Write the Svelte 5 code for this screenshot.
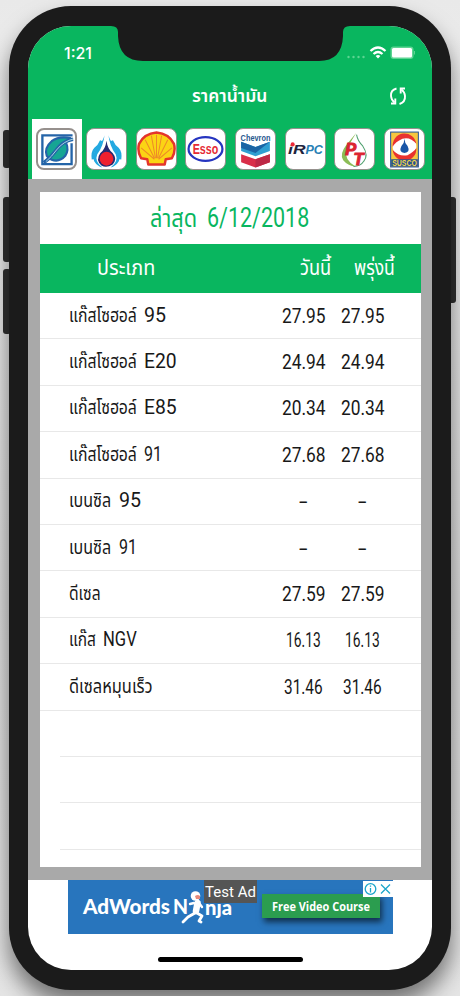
<script lang="ts">
	type Part = [text: string, width: number];
	type Row = { name: Part; grade?: Part; price: Part };

	const brands = ['bangchak', 'ptt', 'shell', 'esso', 'chevron', 'irpc', 'pt', 'susco'];
	let selected = $state('bangchak');

	// today and tomorrow always show the same price here
	const rows: Row[] = [
		{ name: ['แก๊สโซฮอล์', 68], grade: ['95', 22], price: ['27.95', 44] },
		{ name: ['แก๊สโซฮอล์', 68], grade: ['E20', 33], price: ['24.94', 44] },
		{ name: ['แก๊สโซฮอล์', 68], grade: ['E85', 33], price: ['20.34', 44] },
		{ name: ['แก๊สโซฮอล์', 68], grade: ['91', 18], price: ['27.68', 44] },
		{ name: ['เบนซิล', 42], grade: ['95', 22], price: ['-', 9] },
		{ name: ['เบนซิล', 42], grade: ['91', 18], price: ['-', 9] },
		{ name: ['ดีเซล', 32], price: ['27.59', 44] },
		{ name: ['แก๊ส', 27], grade: ['NGV', 34], price: ['16.13', 35] },
		{ name: ['ดีเซลหมุนเร็ว', 84], price: ['31.46', 39] }
	];

	// squeeze a label horizontally to the given width
	function fit(node: HTMLElement, width: number) {
		const natural = node.offsetWidth;
		node.style.transform = `scaleX(${width / natural})`;
		node.style.marginRight = `${width - natural}px`;
	}
</script>

{#snippet label([text, width]: Part)}
	<span class="fit" use:fit={width}>{text}</span>
{/snippet}

<div class="stage">
	<i class="key mute"></i>
	<i class="key up"></i>
	<i class="key down"></i>
	<i class="key power"></i>
	<div class="phone">
		<div class="screen">
			<svg class="notch" width="240" height="36" viewBox="83 0 240 36">
				<path d="M83 0Q90 0 90 6V10Q91 35 115 35H291Q314 35 315 10V6Q315 0 322 0Z" fill="#1b1b1b" />
			</svg>

			<header>
				<div class="status">
					<span class="time">1:21</span>
					<svg width="68" height="16" viewBox="0 0 68 16">
						<g fill="#5dd492">
							<circle cx="1.5" cy="12" r="1.2" /><circle cx="6.5" cy="12" r="1.2" />
							<circle cx="11.5" cy="12" r="1.2" /><circle cx="16.5" cy="12" r="1.2" />
						</g>
						<g fill="none" stroke="#fff" stroke-width="2.2">
							<path d="M23.5 6Q31 -1 38.5 6" />
							<path d="M26.5 9Q31 5 35.5 9" />
						</g>
						<path d="M31 13.5L28.6 11Q31 9 33.4 11Z" fill="#fff" />
						<rect x="43.5" y="1.5" width="23" height="12.5" rx="3" fill="#5dd492" />
						<rect x="45" y="3" width="20" height="9.5" rx="1.5" fill="#fff" />
						<path d="M67.5 6V9.5" stroke="#5dd492" />
					</svg>
				</div>
				<div class="nav">
					<h1>{@render label(['ราคาน้ำมัน', 75])}</h1>
					<button class="refresh" aria-label="refresh">
						<svg width="18" height="20" viewBox="0 0 18 20" fill="none" stroke="#fff" stroke-width="1.9">
							<path d="M7.5 2.5Q1.5 4 2 10Q2.3 14 5.5 16.5" />
							<path d="M10.5 18Q16.5 16 16 10Q15.7 6 12.5 3.5" />
							<path d="M2 17.5H6.3V12.5M16 2.5H11.7V7.5" />
						</svg>
					</button>
				</div>
			</header>

			<div class="tabs">
				{#each brands as brand (brand)}
					<button class="tab" class:active={selected === brand} aria-label={brand} onclick={() => (selected = brand)}>
						<svg class="logo" viewBox="1 1 38 38">
							{#if brand === 'bangchak'}
								<path d="M36.5 6H5.5V35.5H35.5V14" fill="none" stroke="#2464a8" stroke-width="2.4" />
								<path d="M35 9Q23 6 15 12Q7 19 10 27Q12 30 15 31Q23 34 29 27Q33 21 30 14" fill="#16a594" stroke="#2464a8" stroke-width="2.2" />
								<path d="M7 34Q14 29 19 22Q26 12 37 10" fill="none" stroke="#2464a8" stroke-width="3.6" />
								<path d="M9 33Q15 28 20 21Q27 12 38 9.5" fill="none" stroke="#bfe4ea" stroke-width="0.9" />
							{:else if brand === 'ptt'}
								<path d="M18.5 4Q18 11 12 17Q5 25 8 32Q11 37 16 38Q8 32 11 25Q17 18 18.5 4ZM21.5 4Q22 11 28 17Q35 25 32 32Q29 37 24 38Q32 32 29 25Q23 18 21.5 4Z" fill="#24a9e1" />
								<path d="M15 12Q13 17 9 20Q6 23 7 30M25 12Q27 17 31 20Q34 23 33 30" stroke="#24a9e1" stroke-width="2.8" fill="none" />
								<path d="M20 12Q19 20 14 24Q9 31 15 36Q20 39 26 35Q31 30 26 24Q21 20 20 12Z" fill="#252a72" />
								<circle cx="20" cy="29.5" r="6.7" fill="#ee202e" />
							{:else if brand === 'shell'}
								<path d="M12 35L11 30L5 29Q1 22 3 15Q8 5 20 4Q32 5 37 15Q39 22 35 29L29 30L28 35Z" fill="#fbd414" stroke="#e4352b" stroke-width="2.4" stroke-linejoin="round" />
								<path d="M18 30L5 19M18 29L9 11M19 29L15 7M20 29V6M21 29L25 7M22 29L31 11M22 30L35 19" stroke="#ee8a28" />
							{:else if brand === 'esso'}
								<ellipse cx="20" cy="20" rx="16.5" ry="11.5" fill="#fff" stroke="#2635c0" stroke-width="2.2" />
								<text x="7.5" y="25" textLength="25" lengthAdjust="spacingAndGlyphs" font-size="14" font-weight="900" fill="#e62b35">Esso</text>
							{:else if brand === 'chevron'}
								<text x="5.5" y="12" textLength="29" lengthAdjust="spacingAndGlyphs" font-size="8.5" font-weight="700" fill="#28588e">Chevron</text>
								<path d="M6 13L20 18L34 13V22L20 27L6 22Z" fill="#2f9fd1" />
								<path d="M6 13L20 18L34 13L20 24L6 19Z" fill="#1b65a5" />
								<path d="M6 25L20 30L34 25V33L20 38L6 33Z" fill="#d92f49" />
								<path d="M20 30L34 25V33L20 38Z" fill="#bd2946" />
							{:else if brand === 'irpc'}
								<g font-size="12.5" font-weight="900" font-style="italic">
									<text x="3" y="25" textLength="17" lengthAdjust="spacingAndGlyphs" fill="#20233d">iR</text>
									<text x="20" y="25" textLength="17" lengthAdjust="spacingAndGlyphs" fill="#277fb5">PC</text>
								</g>
								<circle cx="7.5" cy="15.5" r="2" fill="#ed2738" />
							{:else if brand === 'pt'}
								<path d="M22 4Q18 9 12 16Q5 25 9 31Q14 37 21 37Q10 31 12 22Q15 15 22 4Z" fill="#8cbd57" />
								<path d="M22 6Q23 12 28 17Q34 26 29 32Q26 37 19 37" fill="none" stroke="#4fa06f" />
								<g font-size="16" font-weight="900" font-style="italic" fill="#dc2430" stroke="#dc2430" stroke-width="1">
									<text x="11" y="26">P</text>
									<text x="19" y="36">T</text>
								</g>
							{:else}
								<rect x="6.5" y="3.5" width="27" height="34" fill="#f6c640" stroke="#23569c" />
								<circle cx="20" cy="17.5" r="11.5" fill="#fff" />
								<path d="M8.5 18A11.5 11.5 0 0 1 31.5 15Q26 8 18 10Q11 13 8.5 18Z" fill="#e9322f" />
								<path d="M31.5 19A11.5 11.5 0 0 1 8.5 21Q15 28 23 26Q29 23 31.5 19Z" fill="#e9322f" />
								<path d="M20 10Q20 14 17 17Q14 23 20 24Q26 23 23 17Q20 14 20 10Z" fill="#1956a7" />
								<rect x="7" y="30" width="26" height="7" fill="#245190" />
								<text x="8" y="36.5" textLength="24" lengthAdjust="spacingAndGlyphs" font-size="8" font-weight="900" fill="#f6d64a">SUSCO</text>
							{/if}
						</svg>
					</button>
				{/each}
			</div>

			<main>
				<div class="card">
					<h2>
						{@render label(['ล่าสุด', 47])}
						<b>{@render label(['6/12/2018', 102])}</b>
					</h2>
					<div class="row head">
						<span class="type">{@render label(['ประเภท', 58])}</span>
						<span class="price">{@render label(['วันนี้', 31])}</span>
						<span class="price">{@render label(['พรุ่งนี้', 41])}</span>
					</div>
					{#each rows as row}
						<div class="row">
							<span class="name">
								{@render label(row.name)}
								{#if row.grade}
									<b>{@render label(row.grade)}</b>
								{/if}
							</span>
							<span class="price">{@render label(row.price)}</span>
							<span class="price">{@render label(row.price)}</span>
						</div>
					{/each}
					{#each [1, 2, 3] as n (n)}
						<div class="row empty"></div>
					{/each}
				</div>
			</main>

			<footer>
				<div class="ad">
					<svg class="adwords" width="170" height="54" viewBox="0 0 170 54">
						<g font-size="20.5" font-weight="900" fill="#fff">
							<text x="15" y="34" textLength="87" lengthAdjust="spacingAndGlyphs">AdWords</text>
							<text x="105" y="34" textLength="15" lengthAdjust="spacingAndGlyphs">N</text>
							<text x="137" y="34.5" textLength="27" lengthAdjust="spacingAndGlyphs">nja</text>
						</g>
						<g fill="none" stroke="#fff" stroke-linecap="round" stroke-linejoin="round">
							<path d="M129.5 23L128 31" stroke-width="6.5" />
							<path d="M126 23L122 24M131 23L134 27" stroke-width="2.4" />
							<path d="M127 33L120 37L115 42M129 33L134 36L131 41L133 42" stroke-width="2.8" />
						</g>
						<circle cx="127.5" cy="16" r="4.8" fill="#fff" />
						<path d="M127 16Q130 14 132 16V19H128Z" fill="#e58a7c" />
					</svg>
					<span class="course">{@render label(['Free Video Course', 98])}</span>
					<span class="test">Test Ad</span>
					<svg class="choices" width="30" height="16" viewBox="0 0 30 16" fill="none" stroke="#1ba5ca" stroke-width="1.3">
						<rect width="30" height="16" fill="#fff" stroke="none" />
						<circle cx="7.5" cy="8" r="5.3" />
						<path d="M7.5 7V11.5M7.5 4.5V5.8M18 3.5L27 12.5M27 3.5L18 12.5" />
					</svg>
				</div>
				<i class="home"></i>
			</footer>
		</div>
	</div>
</div>

<style>
	:global(body) {
		margin: 0;
	}

	.stage {
		position: relative;
		box-sizing: border-box;
		width: 460px;
		height: 996px;
		padding: 6px 9px;
		overflow: hidden;
		background: linear-gradient(#e9e9e9, #ededed 12%, #ddd 60%, #e5e5e5);
		font-family: Roboto, "Noto Sans Thai", "Noto Sans", sans-serif;
	}

	.phone {
		position: relative;
		box-sizing: border-box;
		width: 442px;
		height: 984px;
		padding: 20px 19px;
		border-radius: 62px;
		background: #1b1b1b;
		box-shadow: 0 14px 22px rgba(0, 0, 0, 0.5);
	}

	.screen {
		position: relative;
		width: 404px;
		height: 944px;
		overflow: hidden;
		display: flex;
		flex-direction: column;
		border-radius: 43px;
		background: #fff;
	}

	.key {
		position: absolute;
		left: 3px;
		width: 8px;
		border-radius: 3px;
		background: #303030;
	}

	.mute {
		top: 130px;
		height: 38px;
	}

	.up {
		top: 197px;
		height: 65px;
	}

	.down {
		top: 269px;
		height: 65px;
	}

	.power {
		left: 448px;
		top: 197px;
		height: 106px;
	}

	.notch {
		position: absolute;
		left: 83px;
		top: 0;
	}

	header {
		height: 93px;
		background: #09b65f;
		color: #fff;
	}

	.status {
		display: flex;
		justify-content: space-between;
		align-items: center;
		height: 53px;
		padding: 0 17px 0 36px;
	}

	.time {
		font: 500 16px Inter, sans-serif;
	}

	.nav {
		display: grid;
		grid-template-columns: 60px 1fr 60px;
		align-items: center;
		height: 34px;
	}

	h1 {
		grid-column: 2;
		margin: 0;
		padding-top: 1px;
		text-align: center;
		font-size: 17px;
		font-weight: 600;
	}

	.refresh {
		padding: 0 0 0 17px;
		border: 0;
		background: none;
		text-align: left;
		line-height: 0;
	}

	.fit {
		display: inline-block;
		white-space: nowrap;
		transform-origin: left;
	}

	.tabs {
		display: flex;
		height: 60px;
		padding-left: 4px;
		background: #09b65f;
	}

	.tab {
		display: grid;
		place-items: center;
		width: 49.7px;
		padding: 0;
		border: 0;
		background: none;
	}

	.tab.active {
		background: #fff;
	}

	.logo {
		box-sizing: border-box;
		width: 41px;
		height: 42px;
		border: 1.5px solid #96908d;
		border-radius: 8px;
		background: #fff;
	}

	.active .logo {
		border-width: 2px;
	}

	main {
		box-sizing: border-box;
		height: 701px;
		padding: 13px 11px 13px 12px;
		background: #a9a9a9;
	}

	.card {
		height: 675px;
		background: #fff;
		overflow: hidden;
	}

	h2 {
		display: flex;
		justify-content: center;
		align-items: baseline;
		gap: 10px;
		margin: 0;
		padding-right: 1px;
		height: 52px;
		line-height: 52px;
		font-size: 25px;
		font-weight: 400;
		color: #09b65f;
	}

	b {
		font-weight: 400;
	}

	h2 b {
		font-size: 28px;
	}

	.row {
		box-sizing: border-box;
		display: grid;
		grid-template-columns: 234px 59px 59px;
		align-items: center;
		height: 46.4px;
		border-bottom: 1.5px solid #e8e8e8;
		font-size: 20.5px;
		color: #181818;
	}

	.head {
		grid-template-columns: 246px 59px 59px;
		height: 49px;
		border: 0;
		background: #09b65f;
		color: #fff;
	}

	.name {
		display: flex;
		align-items: baseline;
		gap: 7.5px;
		padding-left: 29px;
		font-size: 19.5px;
	}

	.name b {
		font-size: 20.5px;
	}

	.type {
		padding-right: 73px;
		text-align: center;
	}

	.price {
		text-align: center;
	}

	.empty {
		margin-left: 20px;
	}

	footer {
		display: flex;
		flex-direction: column;
		align-items: center;
		height: 90px;
	}

	.ad {
		position: relative;
		display: flex;
		width: 325px;
		height: 54px;
		margin-left: 1px;
		background: #2875bd;
	}

	.adwords {
		width: 170px;
		font-family: Lato, sans-serif;
	}

	.course {
		width: 118px;
		height: 24px;
		margin: 14px 0 0 24px;
		background: #2b9d4f;
		box-shadow: 2px 4px 6px rgba(0, 0, 0, 0.6);
		color: #fff;
		font: 700 12.5px/25px "Open Sans", sans-serif;
		text-align: center;
	}

	.test {
		position: absolute;
		left: 136px;
		top: 0;
		width: 53px;
		height: 23px;
		background: #555;
		color: #fff;
		font-size: 15px;
		line-height: 24px;
		text-align: center;
	}

	.choices {
		position: absolute;
		right: 0;
		top: 1px;
	}

	.home {
		width: 145px;
		height: 5px;
		margin-top: 23px;
		border-radius: 3px;
		background: #000;
	}
</style>
